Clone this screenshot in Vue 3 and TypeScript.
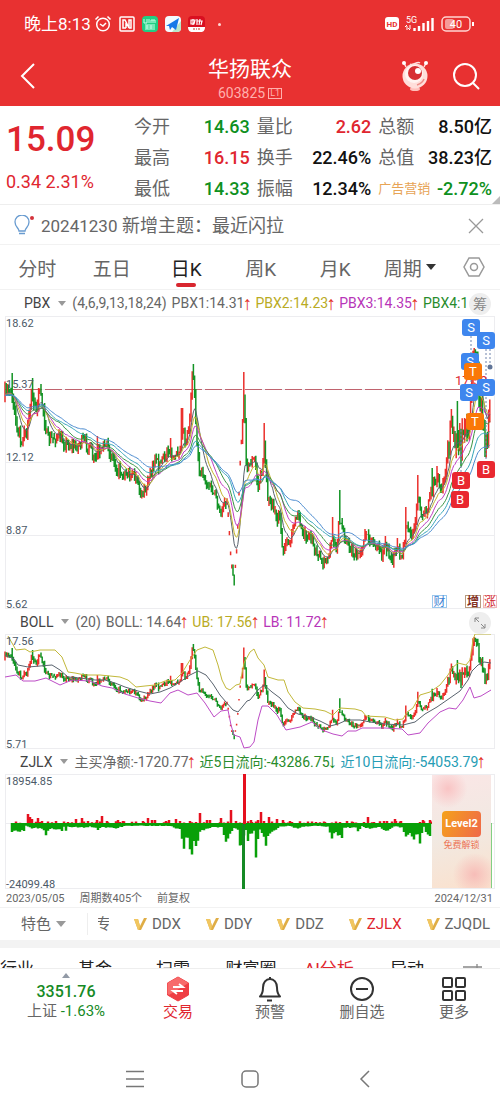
<script setup lang="ts">
type Point = [number, number]
interface Bar { x: number; high: number; low: number; close: number; up: boolean }
interface Mark { x: number; y: number; text: string; kind: string }

const quotes = [
  { label: '今开', value: '14.63', tone: 'down' },
  { label: '量比', value: '2.62', tone: 'up' },
  { label: '总额', value: '8.50亿', tone: '' },
  { label: '最高', value: '16.15', tone: 'up' },
  { label: '换手', value: '22.46%', tone: '' },
  { label: '总值', value: '38.23亿', tone: '' },
  { label: '最低', value: '14.33', tone: 'down' },
  { label: '振幅', value: '12.34%', tone: '' },
  { label: '广告营销', value: '-2.72%', tone: 'down', sector: true },
]
const periods = ['分时', '五日', '日K', '周K', '月K', '周期']
const indicators = ['DDX', 'DDY', 'DDZ', 'ZJLX', 'ZJQDL']
const sections = ['行业', '基金', '扫雷', '财富圈', 'AI分析', '异动']

let seed = 7
function random(): number {
  seed = (seed * 16807) % 2147483647
  return seed / 2147483647
}

function interpolate(points: Point[], x: number): number {
  for (let i = 1; i < points.length; i++) {
    const [x0, y0] = points[i - 1]
    const [x1, y1] = points[i]
    if (x <= x1) return y0 + ((y1 - y0) * (x - x0)) / (x1 - x0)
  }
  return points[points.length - 1][1]
}

const closes: Point[] = [
  [5, 396], [10, 388], [13, 400], [15, 412], [18, 430], [23, 440], [27, 430], [30, 405], [32, 392], [34, 404], [37, 410],
  [39, 396], [43, 405], [46, 430], [48, 440], [57, 437], [65, 443], [75, 447], [83, 441], [90, 447], [93, 460], [97, 458],
  [99, 448], [106, 447], [112, 455], [117, 469], [125, 473], [135, 478], [140, 492], [143, 494], [147, 488], [150, 471],
  [155, 462], [160, 465], [168, 450], [174, 461], [180, 448], [182, 425], [185, 440], [188, 432], [190, 412], [192, 378],
  [194, 374], [195, 400], [197, 450], [199, 470], [202, 470], [206, 482], [212, 490], [216, 500], [220, 516], [223, 502],
  [226, 498], [228, 510], [230, 541], [231, 559], [233, 575], [234, 588], [235, 570], [237, 545], [238, 520], [240, 465],
  [242, 430], [244, 395], [246, 455], [248, 468], [251, 462], [255, 460], [258, 488], [262, 470], [264, 445], [266, 475],
  [268, 500], [272, 503], [277, 517], [280, 520], [283, 556], [286, 545], [288, 546], [293, 527], [298, 515], [302, 532],
  [310, 535], [316, 549], [323, 566], [328, 556], [332, 540], [336, 555], [339, 523], [343, 530], [348, 545], [352, 551],
  [357, 559], [362, 545], [368, 537], [375, 545], [382, 555], [386, 545], [392, 561], [397, 551], [403, 552], [406, 520],
  [410, 537], [415, 522], [418, 503], [422, 513], [427, 512], [432, 490], [437, 478], [441, 489], [445, 471], [448, 446],
  [451, 426], [454, 442], [458, 432], [461, 444], [465, 425], [468, 438], [471, 400], [474, 350], [477, 366], [480, 402],
  [484, 438], [486, 444], [489, 416], [491, 396],
]
const spikes: Point[] = [
  [12, 373], [33, 378], [39, 388], [97, 436], [171, 438], [182, 408], [193, 364], [244, 372], [264, 423], [333, 517],
  [340, 490], [365, 529], [385, 536], [397, 538], [406, 507], [418, 475], [432, 468], [437, 466], [457, 401], [491, 372],
]

function buildBars(): Bar[] {
  const bars: Bar[] = []
  let previous = 400
  for (let i = 0; i < 405; i++) {
    const x = 5 + i * 1.2
    const halted = x > 228 && x < 242
    const swing = x > 448 ? 24 : x < 45 ? 15 : 11
    const close = interpolate(closes, x) + (halted ? 0 : (random() - 0.5) * swing)
    const open = halted && !(x > 232 && x < 235) ? close + 3 : previous
    const top = Math.min(open, close)
    const bottom = Math.max(open, close)
    const wick = halted ? 1 : swing / 2
    const spike = spikes.find((s) => Math.abs(s[0] - x) <= 0.6)
    bars.push({
      x, close,
      high: spike ? Math.min(spike[1], top) : top - random() * wick,
      low: bottom + random() * wick,
      up: close <= open,
    })
    previous = close
  }
  return bars
}
const bars = buildBars()

// The BOLL panel shows the same prices on a flatter scale.
const toBoll = (y: number): number => 634 + (y - 340.7) * 0.43
const same = (y: number): number => y

function candlePath(up: boolean, from: number, scale: (y: number) => number): string {
  return bars
    .slice(from, from + 5)
    .filter((b) => b.up === up)
    .map((b) => `M${b.x.toFixed(1)} ${scale(b.high).toFixed(1)}V${scale(b.low).toFixed(1)}`)
    .join('')
}
// Short alternating runs keep either colour from covering the other along the whole chart.
function candleRuns(scale: (y: number) => number): { tone: string; d: string }[] {
  return Array.from({ length: 81 }, (_, i) => i * 5)
    .flatMap((from) => [
      { tone: 'rise', d: candlePath(true, from, scale) },
      { tone: 'fall', d: candlePath(false, from, scale) },
    ])
    .filter((run) => run.d !== '')
}
const mainRuns = candleRuns(same)
const bollRuns = candleRuns(toBoll)

function linePath(points: Point[]): string {
  return 'M' + points.map(([x, y]) => `${x.toFixed(1)} ${y.toFixed(1)}`).join('L')
}

function average(index: number, span: number): number {
  let sum = 0
  for (let k = 0; k < span; k++) {
    const j = index - k
    sum += j >= 0 ? bars[j].close : 396
  }
  return sum / span
}

function pbxPath(n: number): string {
  let ema = 396
  return linePath(
    bars.map((b, i): Point => {
      ema += ((b.close - ema) * 2) / (n + 1)
      return [b.x, (ema + average(i, n * 2) + average(i, n * 4)) / 3]
    }),
  )
}

const pbxLines = [
  { n: 4, color: '#59636e' }, { n: 6, color: '#c3b42c' }, { n: 9, color: '#c03cc0' },
  { n: 13, color: '#3b9442' }, { n: 18, color: '#35a5b8' }, { n: 24, color: '#4a8bd0' },
].map((l) => ({ color: l.color, d: pbxPath(l.n) }))

const bollLines: { color: string; points: Point[] }[] = [
  { color: '#c2b83a', points: [
    [8, 636], [12, 643], [16, 650], [25, 649], [30, 652], [40, 650], [55, 650], [62, 657], [68, 672], [75, 673], [85, 675],
    [100, 675], [120, 677], [128, 680], [136, 687], [145, 686], [155, 685], [165, 681], [175, 680], [182, 673], [190, 660],
    [197, 650], [205, 647], [213, 650], [218, 665], [222, 680], [226, 688], [230, 690], [236, 685], [240, 684], [244, 663],
    [250, 652], [254, 649], [258, 658], [264, 665], [268, 677], [278, 680], [284, 680], [288, 692], [295, 702], [303, 708],
    [315, 709], [325, 711], [333, 715], [340, 708], [355, 709], [362, 711], [366, 716], [385, 717], [395, 720], [403, 719],
    [407, 712], [413, 708], [420, 695], [430, 692], [440, 685], [448, 675], [452, 668], [458, 663], [466, 665], [470, 660],
    [473, 640], [475, 634], [491, 634]] },
  { color: '#59636e', points: [
    [5, 655], [14, 659], [18, 665], [28, 667], [40, 666], [52, 665], [60, 670], [68, 677], [80, 678], [95, 680], [105, 680],
    [115, 683], [125, 687], [138, 691], [150, 694], [160, 692], [170, 688], [180, 682], [190, 675], [198, 671], [206, 675],
    [213, 684], [220, 695], [226, 702], [233, 710], [238, 712], [243, 706], [247, 701], [250, 700], [258, 690], [264, 685],
    [272, 692], [280, 698], [288, 708], [298, 714], [310, 717], [320, 721], [330, 726], [338, 724], [347, 720], [360, 720],
    [370, 722], [385, 724], [403, 725], [415, 722], [425, 714], [437, 707], [450, 698], [460, 691], [468, 680], [472, 671],
    [478, 665], [484, 662], [491, 663]] },
  { color: '#bd4cc6', points: [
    [5, 677], [16, 675], [23, 681], [35, 681], [46, 678], [60, 685], [72, 680], [90, 681], [102, 686], [112, 688], [125, 694],
    [138, 698], [150, 701], [161, 703], [170, 693], [178, 690], [188, 695], [197, 693], [205, 703], [214, 717], [221, 711],
    [228, 710], [231, 725], [234, 735], [240, 737], [244, 748], [250, 747], [254, 742], [258, 720], [262, 706], [268, 706],
    [277, 715], [286, 730], [300, 727], [312, 722], [322, 730], [333, 734], [342, 736], [348, 731], [356, 731], [362, 728],
    [385, 728], [402, 729], [408, 735], [420, 733], [428, 723], [440, 712], [449, 708], [456, 709], [463, 700], [470, 687],
    [474, 698], [481, 696], [491, 690]] },
]

const inflow: Point[] = [
  [28, 10], [30, 7], [32, 5], [38, 6], [42, 3], [76, 5], [82, 6], [97, 4], [102, 8], [107, 3], [118, 4], [123, 3], [143, 3],
  [148, 6], [152, 4], [155, 4], [166, 3], [169, 4], [176, 5], [180, 3], [190, 3], [200, 11], [207, 4], [210, 4], [221, 6],
  [231, 14], [236, 3], [251, 4], [258, 4], [261, 12], [269, 7], [277, 5], [283, 4], [290, 3], [325, 2], [347, 3],
  [353, 2], [368, 7], [374, 2], [387, 3], [395, 5], [401, 3], [423, 4], [430, 4],
]
const outflow: Point[] = [
  [12, 9], [24, 8], [26, 2], [33, 5], [40, 4], [44, 6], [46, 13], [49, 6], [58, 5], [62, 8], [64, 3], [65, 10], [68, 3],
  [80, 4], [90, 3], [97, 4], [98, 8], [101, 3], [115, 5], [125, 2], [140, 2], [170, 2], [180, 6], [184, 24], [187, 8],
  [192, 36], [193, 15], [196, 28], [200, 10], [205, 5], [215, 3], [222, 4], [226, 17], [230, 12], [233, 4], [238, 6],
  [240, 26], [246, 8], [248, 22], [251, 6], [253, 14], [254, 8], [256, 35], [259, 6], [263, 10], [266, 27],
  [268, 12], [275, 8], [280, 3], [289, 2], [299, 6], [302, 3], [320, 2], [328, 3], [332, 18], [335, 8], [342, 16], [344, 4],
  [356, 4], [358, 9], [362, 2], [370, 6], [378, 3], [387, 7], [395, 2], [402, 4], [406, 15], [410, 10], [414, 20], [417, 9],
  [420, 20], [424, 3], [428, 13], [431, 16],
]
const flowUp =
  inflow.map(([x, h]) => `M${x} 824V${824 - h}`).join('') +
  Array.from({ length: 105 }, (_, i) => `M${16 + i * 4} 824v${-(random() * 3).toFixed(1)}`).join('')
const flowDown = Array.from({ length: 210 }, (_, i) => {
  const x = 12 + i * 2
  return `M${x} 823v${(1 + interpolate(outflow, x) * (0.75 + random() * 0.3)).toFixed(1)}`
}).join('')

const axis = [
  { y: 327, text: '18.62' }, { y: 388, text: '15.37' }, { y: 461, text: '12.12' },
  { y: 534, text: '8.87' }, { y: 608, text: '5.62' },
]
const marks: Mark[] = [
  { x: 462, y: 319, text: 'S', kind: 'sell' }, { x: 477, y: 332, text: 'S', kind: 'sell' },
  { x: 461, y: 353, text: 'S', kind: 'sell' }, { x: 464, y: 363, text: 'T', kind: 'trade' },
  { x: 460, y: 384, text: 'S', kind: 'sell' }, { x: 477, y: 379, text: 'S', kind: 'sell' },
  { x: 466, y: 413, text: 'T', kind: 'trade' }, { x: 477, y: 461, text: 'B', kind: 'buy' },
  { x: 452, y: 472, text: 'B', kind: 'buy' }, { x: 451, y: 491, text: 'B', kind: 'buy' },
]
</script>

<template>
  <main class="app">
    <header class="top">
      <div class="status">
        <div class="status-group">
          <time class="clock">晚上8:13</time>
          <svg class="alarm" width="18" height="18" viewBox="0 0 18 18" fill="none" stroke="#fff" stroke-width="1.5">
            <circle cx="9" cy="9.500" r="6.300" /><path d="M6 9l3 2 3-3M1.500 4.500l3-3M16.500 4.500l-3-3" />
          </svg>
          <svg width="16" height="16" viewBox="0 0 16 16" fill="none" stroke="#fff" stroke-width="1.500">
            <rect x="1" y="1" width="14" height="14" rx="1" /><path d="M7 12H4V4h2l4 8V4h2v8h-2M7 7v5" />
          </svg>
          <svg width="16" height="16" viewBox="0 0 16 16">
            <rect width="16" height="16" rx="4" fill="#20cf83" />
            <path d="M2 3v4h3V3M7 3v4M9 7V4h2v3M11 4h2v3M3 9h10M3 11h10M3 13h10M5 9v4M9 9v4" fill="none" stroke="#c9ffe7" />
          </svg>
          <svg width="16" height="16" viewBox="0 0 16 16">
            <rect width="16" height="16" rx="4" fill="#f3fbff" /><path d="M7 16h5a4 4 0 0 0 4-4V5z" fill="#b9e6c9" />
            <path d="M1 10 14 2l-3 12-4-3-2 3-1-4z" fill="#1678e8" />
          </svg>
          <svg width="17" height="16" viewBox="0 0 17 16">
            <rect width="17" height="16" rx="4" fill="#d90f20" /><path d="M0 11h17c0 4-2 5-4 5H4c-2 0-4-1-4-5z" fill="#fff" />
            <path d="M3 4h4L6 8H3zM5 3v6M9 3v6M9 5h5l-1 4M12 3l-1 6" fill="none" stroke="#fff" stroke-width="1.200" />
            <path d="M5 13h2M8 13h1M10 13h2" stroke="#c32" />
          </svg>
          <i class="more-dot"></i>
        </div>
        <svg width="90" height="18" viewBox="0 0 90 18" role="img" aria-label="HD 5G 40%">
          <rect x="0" y="2" width="14" height="13" rx="3" fill="#fff" />
          <text x="7" y="12" text-anchor="middle" class="hd">HD</text>
          <text x="21" y="8" class="net">5G</text>
          <path d="M22 15v-4M20 12l2-2M25 10v4M23 13l2 2" stroke="#fff" fill="none" />
          <path d="M29.500 16v-3M34 16v-5M38.500 16V8M43 16V6M47.500 16V3" stroke="#fff" stroke-width="2.400" />
          <rect x="57" y="2" width="28" height="14" rx="4" fill="none" stroke="#ffd5d2" stroke-width="1.500" />
          <rect x="60" y="4" width="9" height="10" rx="2" fill="#f59a98" /><path d="M88 7v4" stroke="#fff" stroke-width="2" />
          <text x="71" y="13" text-anchor="middle" class="battery">40</text>
        </svg>
      </div>
      <div class="title-bar">
        <button class="icon-button back" aria-label="返回">
          <svg width="16" height="26" viewBox="0 0 16 26" fill="none" stroke="#fff" stroke-width="2"><path d="M14 1 2 13l12 12" /></svg>
        </button>
        <div class="title">
          <h1>华扬联众</h1>
          <p>603825<span class="level">L1</span></p>
        </div>
        <div class="title-actions">
          <button class="icon-button" aria-label="助手">
            <svg width="28" height="32" viewBox="0 0 28 32">
              <path d="M5 7 3 3M23 7l2-4M9 4c3 2 7-3 10-1" stroke="#ffe1df" stroke-width="1.500" fill="none" />
              <circle cx="3" cy="3" r="2" fill="#fff" /><circle cx="25" cy="3" r="2" fill="#fff" />
              <ellipse cx="14" cy="29" rx="5" ry="2" fill="#ffc0bb" />
              <circle cx="14" cy="16" r="12.500" fill="#ffdeda" /><circle cx="13" cy="14" r="9" fill="#fff4f1" />
              <circle cx="14" cy="13" r="7" fill="#d72f33" /><circle cx="17" cy="11" r="3" fill="#fff" />
              <path d="M16 25c3-1 6-3 7-6" stroke="#ed8c86" stroke-width="1.500" fill="none" />
            </svg>
          </button>
          <button class="icon-button" aria-label="搜索">
            <svg width="28" height="28" viewBox="0 0 28 28" fill="none" stroke="#fff" stroke-width="2">
              <circle cx="13" cy="13" r="11" /><path d="m21 21 6 6" />
            </svg>
          </button>
        </div>
      </div>
    </header>

    <section class="quote">
      <div class="price up"><strong>15.09</strong><span>0.34 2.31%</span></div>
      <dl class="stats">
        <div v-for="q in quotes" :key="q.label" class="stat">
          <dt :class="{ sector: q.sector }">{{ q.label }}</dt><dd :class="q.tone">{{ q.value }}</dd>
        </div>
      </dl>
      <i class="corner"></i>
    </section>

    <section class="notice">
      <svg width="22" height="22" viewBox="0 0 22 22" fill="none" stroke="#689bd0" stroke-width="1.300">
        <path d="M5 16c0-3-4-4-4-9a7 7 0 0 1 14 0c0 5-4 6-4 9zM5 18.500h6" /><circle cx="18" cy="3" r="2" fill="#d4333b" stroke="none" />
      </svg>
      <p><span class="digits">20241230</span> 新增主题：最近闪拉</p>
      <button class="icon-button" aria-label="关闭">
        <svg width="16" height="16" viewBox="0 0 16 16" stroke="#999" stroke-width="1.300"><path d="m1 1 14 14M15 1 1 15" /></svg>
      </button>
    </section>

    <nav class="periods">
      <button v-for="p in periods" :key="p" :class="{ active: p === '日K' }">
        {{ p }}<i v-if="p === '周期'" class="caret dark"></i>
      </button>
      <button aria-label="设置">
        <svg width="22" height="22" viewBox="0 0 22 22" fill="none" stroke="#999" stroke-width="1.500">
          <path d="M6 2h10l5 9-5 9H6l-5-9z" /><circle cx="11" cy="11" r="3.500" />
        </svg>
      </button>
    </nav>

    <section class="panel">
      <div class="legend first">
        <button class="name">PBX<i class="caret"></i></button>
        <span>(4,6,9,13,18,24)</span>
        <span>PBX1:14.31<b class="arrow">↑</b></span>
        <span class="yellow">PBX2:14.23<b class="arrow">↑</b></span>
        <span class="magenta">PBX3:14.35<b class="arrow">↑</b></span>
        <span class="green">PBX4:1</span>
        <button class="round chips">筹</button>
      </div>
      <svg class="chart" viewBox="0 316 500 293" role="img" aria-label="日K线">
        <path class="grid" d="M5 316.500H494M5 389.500H494M5 462.500H494M5 535.500H494M5 608.500H494M5.500 316V609M494.500 316V609" />
        <path d="M5 389.500H460" class="reference" />
        <path v-for="(r, i) in mainRuns" :key="i" :d="r.d" class="candle" :class="r.tone" />
        <path v-for="l in pbxLines" :key="l.color" :d="l.d" :stroke="l.color" class="line" />
        <path d="M471 336V384M486 349V461M461 430V472M490 345V366" class="leader" />
        <circle cx="490" cy="367" r="2.500" fill="#607497" />
        <text v-for="a in axis" :key="a.y" x="6" :y="a.y" class="axis">{{ a.text }}</text>
        <text x="455" y="385" class="peak">17.59</text>
        <g v-for="m in marks" :key="`${m.x}-${m.y}`" :class="m.kind">
          <rect :x="m.x" :y="m.y" width="18" height="17" rx="3" />
          <text :x="m.x + 9" :y="m.y + 13" class="mark">{{ m.text }}</text>
        </g>
        <g class="events">
          <rect x="432.500" y="595.500" width="14" height="12" stroke="#9bc8ee" /><text x="439.500" y="606" fill="#3f84d4">财</text>
          <rect x="465.500" y="595.500" width="15" height="12" stroke="#b89a80" />
          <text x="473" y="606" fill="#83301f" class="stacked">增</text>
          <rect x="483.500" y="595.500" width="13" height="12" stroke="#efb6b6" /><text x="490" y="606" fill="#d22a31">涨</text>
        </g>
      </svg>
    </section>

    <section class="panel">
      <div class="legend">
        <button class="name">BOLL<i class="caret"></i></button>
        <span>(20)</span>
        <span>BOLL: 14.64<b class="arrow">↑</b></span>
        <span class="yellow">UB: 17.56<b class="arrow">↑</b></span>
        <span class="magenta">LB: 11.72<b class="arrow">↑</b></span>
        <button class="round" aria-label="放大">
          <svg width="14" height="14" viewBox="0 0 14 14" fill="none" stroke="#888"><path d="M2 6V2h4M2 2l4 4M12 8v4H8M12 12 8 8" /></svg>
        </button>
      </div>
      <svg class="chart" viewBox="0 634 500 116" role="img" aria-label="BOLL">
        <path class="grid" d="M5 634.500H494M5 748.500H494M5.500 634V749M494.500 634V749" />
        <path v-for="(r, i) in bollRuns" :key="i" :d="r.d" class="candle" :class="r.tone" />
        <path v-for="l in bollLines" :key="l.color" :d="linePath(l.points)" :stroke="l.color" class="line" />
        <text x="6" y="645" class="axis">17.56</text><text x="6" y="748" class="axis">5.71</text>
      </svg>
    </section>

    <section class="panel">
      <div class="legend flows">
        <button class="name">ZJLX<i class="caret"></i></button>
        <span>主买净额:-1720.77<b class="arrow">↑</b></span>
        <span class="green">近5日流向:-43286.75<b class="arrow low">↓</b></span>
        <span class="cyan">近10日流向:-54053.79<b class="arrow">↑</b></span>
      </div>
      <div class="flow-chart">
        <svg class="chart" viewBox="0 773 500 117" role="img" aria-label="资金流向">
          <path class="grid" d="M5 774.500H494M5 823.500H494M5 888.500H494M5.500 774V889M494.500 774V889" />
          <path :d="flowUp" stroke="#e5101e" stroke-width="2.500" />
          <path :d="flowDown" stroke="#08a008" stroke-width="2.500" />
          <path d="M244.500 824V774" stroke="#e5101e" stroke-width="3" /><path d="M243.500 824V889" stroke="#168a25" stroke-width="3" />
          <path d="M491 823V888" stroke="#08a008" />
          <text x="6" y="785" class="axis">18954.85</text><text x="6" y="888" class="axis">-24099.48</text>
        </svg>
        <button class="unlock"><b>Level2</b><span>免费解锁</span></button>
      </div>
      <div class="dates"><time>2023/05/05</time><span>周期数405个</span><span>前复权</span><time class="end">2024/12/31</time></div>
    </section>

    <nav class="indicators">
      <button class="feature">特色<i class="caret wide"></i></button>
      <button class="special">专</button>
      <button v-for="name in indicators" :key="name" :class="{ up: name === 'ZJLX' }">
        <svg width="13" height="12" viewBox="0 0 13 12"><path d="M0 1h4l2 7L10 0h3L7 12H4z" fill="#dfad45" /><path d="M0 1h4l2 7-1 4H4z" fill="#f1c660" /></svg>{{ name }}
      </button>
    </nav>

    <nav class="sections">
      <button v-for="s in sections" :key="s" :class="{ up: s === 'AI分析' }">{{ s }}</button>
      <button aria-label="更多栏目"><svg width="20" height="12" viewBox="0 0 20 12" fill="none" stroke="#888" stroke-width="1.300"><path d="M0 4h19M14 1v5M0 10h19" /></svg></button>
    </nav>

    <nav class="bottom">
      <button class="index">
        <i class="caret rising"></i><strong>3351.76</strong><span><em>上证</em> -1.63%</span>
      </button>
      <button class="up">
        <svg width="26" height="26" viewBox="0 0 26 26">
          <path d="M13 1 23.500 7v12L13 25 2.500 19V7z" fill="#ef3d43" stroke="#ef3d43" stroke-linejoin="round" /><path d="M2.500 7 13 1l10.500 6L4 19l-1.500-1z" fill="#f76b6b" />
          <path d="M8 11h10l-4-3M18 15H8l4 3" fill="none" stroke="#fff" stroke-width="1.800" />
        </svg>交易
      </button>
      <button>
        <svg width="26" height="26" viewBox="0 0 26 26" fill="none" stroke="#333" stroke-width="2">
          <path d="M13 1v2M3 20.500h20c-2-2-3-4-3-9 0-5-3-8.500-7-8.500s-7 3.500-7 8.500c0 5-1 7-3 9zM10 24.500h5" stroke-linejoin="round" />
        </svg>预警
      </button>
      <button>
        <svg width="26" height="26" viewBox="0 0 26 26" fill="none" stroke="#333" stroke-width="2"><circle cx="13" cy="13" r="11" /><path d="M7 13h12" /></svg>删自选
      </button>
      <button>
        <svg width="26" height="26" viewBox="0 0 26 26" fill="none" stroke="#333" stroke-width="2">
          <rect x="2" y="2" width="9" height="9" rx="1" /><rect x="15" y="2" width="9" height="9" rx="1" /><rect x="2" y="15" width="9" height="9" rx="1" /><rect x="15" y="15" width="9" height="9" rx="1" />
        </svg>更多
      </button>
    </nav>

    <nav class="system">
      <button aria-label="最近任务"><svg width="18" height="18" viewBox="0 0 18 18" stroke="#777" stroke-width="1.500"><path d="M0 1.500h18M0 9h18M0 16.500h18" /></svg></button>
      <button aria-label="主屏幕"><svg width="18" height="18" viewBox="0 0 18 18" fill="none" stroke="#777" stroke-width="1.500"><rect x="1" y="1" width="16" height="16" rx="4" /></svg></button>
      <button aria-label="后退"><svg width="18" height="18" viewBox="0 0 18 18" fill="none" stroke="#777" stroke-width="1.500"><path d="M13 1 5 9l8 8" /></svg></button>
    </nav>
  </main>
</template>

<style>
body { margin: 0; background: #fff; }
</style>

<style scoped>
.app { font-family: Roboto, "Noto Sans CJK SC", sans-serif; color: #666; background: #fff; overflow: hidden; }
button { appearance: none; border: 0; padding: 0; margin: 0; background: none; font: inherit; color: inherit; white-space: nowrap; cursor: pointer; }
h1, p, dl, dd { margin: 0; font-weight: 400; }
svg { flex: none; }
.up, .stat .up { color: #e0262f; }
.down, .stat .down { color: #0e9020; }
.icon-button { display: flex; align-items: center; justify-content: center; }

.top { background: #e83131; color: #fff; height: 106px; }
.status { display: flex; justify-content: space-between; align-items: center; height: 48px; padding: 0 25px 0 24px; }
.status-group { display: flex; align-items: center; gap: 7px; }
.clock { font-size: 17px; line-height: 24px; }
.alarm { margin: 0 0 0 -4px; }
.more-dot { width: 3px; height: 3px; margin-left: 6px; border-radius: 50%; background: #ffd8d5; }
.hd { font-size: 8px; font-weight: 700; fill: #e83131; }
.net { font-size: 9px; fill: #fff; }
.battery { font-size: 11px; fill: #fff; }
.title-bar { display: grid; grid-template-columns: 100px 1fr 100px; align-items: center; height: 54px; }
.back { width: 56px; height: 54px; }
.title { text-align: center; padding-top: 7px; }
.title h1 { font-size: 21px; line-height: 28px; }
.title p { display: flex; justify-content: center; align-items: center; gap: 3px; font-size: 14px; line-height: 20px; color: #ffb0ad; }
.level { border: 1px solid #ffb0ad; font-size: 9px; line-height: 9px; padding: 0 1px; }
.title-actions { display: flex; gap: 23px; justify-content: flex-end; padding-right: 20px; }

.quote { position: relative; display: flex; height: 98px; border-bottom: 1px solid #eee; }
.price { flex: 0 0 134px; box-sizing: border-box; padding: 14px 0 0 6px; }
.price strong { display: block; font-size: 35px; line-height: 40px; font-weight: 500; }
.price span { display: block; padding-top: 10px; font-size: 18px; line-height: 24px; }
.stats { flex: 1; display: grid; grid-template-columns: 115fr 114fr 113fr; grid-auto-rows: 31px; column-gap: 7px; padding: 5px 8px 0 0; }
.stat { display: flex; justify-content: space-between; align-items: center; white-space: nowrap; font-size: 18px; line-height: 30px; }
.stat dd { color: #111; font-weight: 500; }
.stat .sector { font-size: 13px; color: #e7a456; }
.corner { position: absolute; right: 0; bottom: 0; border: solid transparent; border-width: 0 0 8px 8px; border-bottom-color: #bbb; }

.notice { display: flex; align-items: center; box-sizing: border-box; height: 40px; padding: 3px 16px 0 14px; border-bottom: 1px solid #f2f2f2; }
.notice p { flex: 1; padding-left: 5px; font-size: 18px; line-height: 26px; }
.digits { font-size: 17px; }

.periods { display: grid; grid-template-columns: repeat(6, 149fr) 106fr; height: 44px; border-bottom: 1px solid #f2f2f2; font-size: 19px; }
.periods button { position: relative; display: flex; align-items: center; justify-content: center; }
.periods .active { color: #222; }
.periods .active::after { content: ""; position: absolute; bottom: 2px; width: 20px; height: 4px; border-radius: 2px; background: #d8262f; }
.caret { display: inline-block; border: solid transparent; border-width: 5px 4px 0; border-top-color: #999; }
.caret.dark { border-width: 6px 5px 0; border-top-color: #333; margin-left: 4px; }
.caret.wide { border-width: 6px 5px 0; margin-left: 5px; }
.caret.rising { border-width: 0 4px 5px; border-bottom-color: #929aa6; }

.legend { position: relative; display: flex; align-items: center; gap: 5px; height: 25px; padding-left: 20px; font-size: 14px; line-height: 20px; white-space: nowrap; }
.legend.first { height: 26px; padding-left: 24px; }
.legend.flows { height: 23px; }
.legend span { display: flex; align-items: center; }
.name { display: flex; align-items: center; gap: 8px; padding-right: 1px; color: #444; }
.arrow { display: flex; justify-content: center; width: 6px; font: 400 19px/19px "Liberation Sans", sans-serif; color: #e33228; }
.arrow.low { color: #168a25; }
.yellow { color: #b9ab24; }
.magenta { color: #b735b8; }
.green { color: #288c2c; }
.cyan { color: #269db5; }
.round { position: absolute; right: 9px; top: 3px; display: flex; align-items: center; justify-content: center; width: 22px; height: 22px; border-radius: 50%; background: #eee; color: #888; }

.chart { display: block; width: 100%; height: auto; }
.grid { stroke: #ededf0; fill: none; }
.reference { stroke: #c0636e; stroke-dasharray: 17 3; }
.candle { stroke-width: 1.5; fill: none; }
.rise { stroke: #eb302c; }
.fall { stroke: #139425; }
.line { fill: none; stroke-width: 1; stroke-linejoin: round; }
.leader { stroke: #6e83ac; stroke-dasharray: 2 2; fill: none; }
.axis { font-size: 11px; fill: #4b5967; }
.peak { font-size: 13px; fill: #e02a33; }
.mark { font-size: 13px; text-anchor: middle; fill: #fff; }
.sell { fill: #3e86ee; }
.trade { fill: #fa7808; }
.buy { fill: #e92830; }
.events { font-size: 12px; text-anchor: middle; }
.events rect { fill: #fff; }
.stacked { font-weight: 700; }

.flow-chart { position: relative; }
.unlock { position: absolute; left: 86.4%; right: 1.8%; top: 2px; bottom: 2px; display: flex; flex-direction: column; align-items: center; justify-content: center; gap: 1px;
  background: radial-gradient(circle at 27% 12%, #f9c4c4 0, transparent 18%), radial-gradient(circle at 72% 88%, #f7bdb8 0, transparent 20%), linear-gradient(165deg, #fbe6e6, #f1e9e2 50%, #fbe1cd); }
.unlock b { padding: 0 3px; border-radius: 4px; background: linear-gradient(115deg, #f5a21b, #ef684a); color: #fff; font-size: 11px; line-height: 26px; font-weight: 700; }
.unlock span { font-size: 9px; line-height: 14px; color: #ec7355; }
.dates { display: flex; align-items: center; gap: 15px; height: 17px; padding: 0 7px 0 6px; font-size: 11px; line-height: 16px; }
.dates .end { margin-left: auto; }

.indicators { display: flex; align-items: center; gap: 25px; height: 32px; border-top: 1px solid #f2f2f2; font-size: 15px; line-height: 22px; white-space: nowrap; }
.indicators button { display: flex; align-items: center; gap: 5px; flex: none; }
.indicators .feature { gap: 0; padding: 0 21px 0 21px; margin-right: -25px; border-right: 1px solid #eee; }
.indicators .special { width: 11px; margin-left: 10px; overflow: hidden; justify-content: center; }

.sections { display: grid; grid-template-columns: repeat(6, 78fr) 54fr; height: 20px; margin-left: -22px; border-top: 8px solid #f3f3f3; overflow: hidden; color: #222; font-size: 17px; line-height: 17px; align-items: start; }
.sections button { padding-top: 13px; }

.bottom { display: grid; grid-template-columns: 132fr repeat(4, 92fr); height: 62px; border-top: 1px solid #eee; font-size: 15px; line-height: 20px; }
.bottom button { display: flex; flex-direction: column; align-items: center; padding-top: 7px; }
.bottom .index { padding-top: 4px; color: #168a25; }
.bottom .index strong { font-size: 16px; line-height: 20px; font-weight: 500; padding-top: 4px; }
.bottom .index span { line-height: 18px; }
.bottom em { font-style: normal; color: #666; }
.system { display: grid; grid-template-columns: repeat(3, 1fr); align-items: center; height: 79px; padding: 0 78px; }
.system button { display: flex; justify-content: center; padding: 16px 0 0; }
</style>
